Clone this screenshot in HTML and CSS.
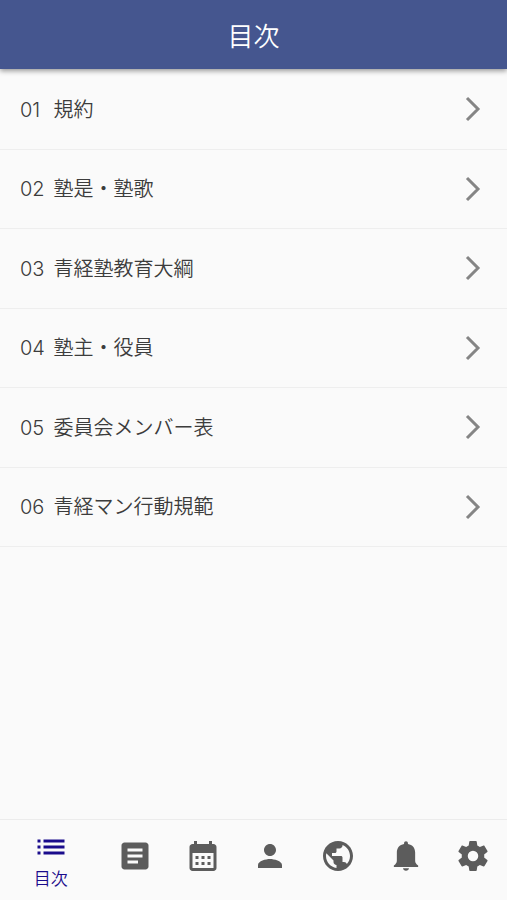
FILE: index.html
```
<!DOCTYPE html>
<html lang="ja">
<head>
<meta charset="utf-8">
<meta name="viewport" content="width=device-width, initial-scale=1">
<title>目次</title>
<link rel="stylesheet" href="styles.css">
</head>
<body>
<header class="header"><h1 class="title">目次</h1></header>
<main class="content">
  <ul class="list">
    <li><a class="row" href="#c1"><span class="label"><span class="num">01</span> 規約</span><svg class="chevron" viewBox="0 0 16 26" aria-hidden="true"><path d="M2 2 13 13 2 24"/></svg></a></li>
    <li><a class="row" href="#c2"><span class="label"><span class="num">02</span> 塾是・塾歌</span><svg class="chevron" viewBox="0 0 16 26" aria-hidden="true"><path d="M2 2 13 13 2 24"/></svg></a></li>
    <li><a class="row" href="#c3"><span class="label"><span class="num">03</span> 青経塾教育大綱</span><svg class="chevron" viewBox="0 0 16 26" aria-hidden="true"><path d="M2 2 13 13 2 24"/></svg></a></li>
    <li><a class="row" href="#c4"><span class="label"><span class="num">04</span> 塾主・役員</span><svg class="chevron" viewBox="0 0 16 26" aria-hidden="true"><path d="M2 2 13 13 2 24"/></svg></a></li>
    <li><a class="row" href="#c5"><span class="label"><span class="num">05</span> 委員会メンバー表</span><svg class="chevron" viewBox="0 0 16 26" aria-hidden="true"><path d="M2 2 13 13 2 24"/></svg></a></li>
    <li><a class="row" href="#c6"><span class="label"><span class="num">06</span> 青経マン行動規範</span><svg class="chevron" viewBox="0 0 16 26" aria-hidden="true"><path d="M2 2 13 13 2 24"/></svg></a></li>
  </ul>
</main>
<nav class="tabs">
  <button class="tab tab-active" type="button">
    <svg class="icon" viewBox="0 0 24 24" aria-hidden="true"><path d="M3 13h2v-2H3v2zm0 4h2v-2H3v2zm0-8h2V7H3v2zm4 4h14v-2H7v2zm0 4h14v-2H7v2zM7 7v2h14V7H7z"/></svg>
    <span>目次</span>
  </button>
  <button class="tab" type="button" aria-label="記事">
    <svg class="icon" viewBox="0 0 24 24" aria-hidden="true"><path d="M19 3H5c-1.1 0-2 .9-2 2v14c0 1.1.9 2 2 2h14c1.1 0 2-.9 2-2V5c0-1.1-.9-2-2-2zm-5 14H7v-2h7v2zm3-4H7v-2h10v2zm0-4H7V7h10v2z"/></svg>
  </button>
  <button class="tab" type="button" aria-label="カレンダー">
    <svg class="icon" viewBox="0 0 24 24" aria-hidden="true"><path fill-rule="evenodd" d="M6 2h2v2h8V2h2v2h1c1.1 0 2 .9 2 2v14c0 1.1-.9 2-2 2H5c-1.1 0-2-.9-2-2V6c0-1.1.9-2 2-2h1V2zM5 10v10h14V10H5zm2 2h2v2H7v-2zm4 0h2v2h-2v-2zm4 0h2v2h-2v-2zm-8 4h2v2H7v-2zm4 0h2v2h-2v-2zm4 0h2v2h-2v-2z"/></svg>
  </button>
  <button class="tab" type="button" aria-label="プロフィール">
    <svg class="icon" viewBox="0 0 24 24" aria-hidden="true"><path d="M12 12c2.21 0 4-1.79 4-4s-1.790-4-4-4-4 1.790-4 4 1.790 4 4 4zm0 2c-2.670 0-8 1.340-8 4v2h16v-2c0-2.660-5.330-4-8-4z"/></svg>
  </button>
  <button class="tab" type="button" aria-label="ウェブ">
    <svg class="icon" viewBox="0 0 24 24" aria-hidden="true"><path d="M12 2C6.480 2 2 6.480 2 12s4.480 10 10 10 10-4.480 10-10S17.520 2 12 2zm-1 17.930c-3.950-.49-7-3.850-7-7.930 0-.62.080-1.210.210-1.790L9 15v1c0 1.100.9 2 2 2v1.930zm6.900-2.540c-.26-.81-1-1.390-1.900-1.390h-1v-3c0-.55-.45-1-1-1H8v-2h2c.55 0 1-.45 1-1V7h2c1.100 0 2-.9 2-2v-.41c2.930 1.190 5 4.060 5 7.410 0 2.080-.8 3.970-2.100 5.390z"/></svg>
  </button>
  <button class="tab" type="button" aria-label="お知らせ">
    <svg class="icon" viewBox="0 0 24 24" aria-hidden="true"><path d="M12 2.200c-.75 0-1.300.55-1.300 1.300v.5C7.700 4.500 5.900 6.700 5.900 9.700v5.300c0 1.200-.4 1.900-1.100 2.600l-.9.7v1h16.200v-1l-.9-.7c-.7-.7-1.100-1.400-1.100-2.600V9.700c0-3-1.800-5.200-4.800-5.700v-.5c0-.75-.55-1.300-1.300-1.300zM10 20.200h4c-.1 1-.9 1.700-2 1.700s-1.900-.7-2-1.700z"/></svg>
  </button>
  <button class="tab" type="button" aria-label="設定">
    <svg class="icon" viewBox="0 0 24 24" aria-hidden="true"><path d="M12 15.500A3.500 3.500 0 0 1 8.500 12 3.500 3.500 0 0 1 12 8.500a3.500 3.500 0 0 1 3.500 3.500 3.500 3.500 0 0 1-3.500 3.500m7.430-2.530c.04-.32.070-.64.070-.97s-.03-.66-.07-1l2.110-1.630c.19-.15.24-.42.12-.64l-2-3.460c-.12-.22-.39-.31-.61-.22l-2.490 1c-.52-.39-1.060-.73-1.690-.98l-.37-2.650A.506.506 0 0 0 14 2h-4c-.25 0-.46.18-.5.42l-.37 2.650c-.63.25-1.170.59-1.690.98l-2.490-1c-.22-.09-.49 0-.61.22l-2 3.460c-.13.22-.07.49.12.64L4.570 11c-.04.34-.07.67-.07 1s.03.65.07.97l-2.110 1.660c-.19.15-.25.42-.12.64l2 3.460c.12.22.39.3.61.22l2.490-1.010c.52.4 1.060.74 1.690.99l.37 2.650c.04.24.25.42.5.42h4c.25 0 .46-.18.5-.42l.37-2.650c.63-.26 1.170-.59 1.690-.99l2.490 1.010c.22.08.49 0 .61-.22l2-3.460c.12-.22.07-.49-.12-.64l-2.110-1.660z"/></svg>
  </button>
</nav>
</body>
</html>
```
FILE: styles.css
```
* { box-sizing: border-box; }

body {
  margin: 0;
  min-height: 100vh;
  display: flex;
  flex-direction: column;
  background: #fafafa;
  color: #3c3c3c;
  font-family: "Noto Sans CJK JP", sans-serif;
}

.header {
  padding: 17px 16px 16px;
  background: #45568f;
  color: #fff;
  text-align: center;
  box-shadow: 0 2px 5px rgba(0, 0, 0, 0.4);
}

.title {
  margin: 0;
  font-size: 26px;
  line-height: 36px;
  font-weight: 350;
}

.content { flex: 1; }

.list {
  display: grid;
  grid-auto-rows: 1fr;
  min-height: 478px;
  margin: 0;
  padding: 1px 0 0;
  list-style: none;
}

.list li {
  display: flex;
  border-bottom: 1px solid #eeeeee;
}

.row {
  flex: 1;
  display: flex;
  align-items: center;
  justify-content: space-between;
  padding: 0 26px 0 20px;
  color: inherit;
  font-size: 20px;
  line-height: 30px;
  font-weight: 350;
  text-decoration: none;
}

.num {
  display: inline-block;
  min-width: 29px;
  font-family: Inter, sans-serif;
  font-weight: 300;
}

.chevron {
  width: 16px;
  height: 26px;
  fill: none;
  stroke: #858585;
  stroke-width: 3;
}

.tabs {
  display: flex;
  height: 81px;
  border-top: 1px solid #ececec;
}

.tab {
  flex: 2 1 0;
  display: flex;
  flex-direction: column;
  align-items: center;
  padding: 18px 0 0;
  border: 0;
  background: none;
  color: #5c5c5c;
  font-family: inherit;
  font-size: 17px;
  line-height: 26px;
  font-weight: 350;
}

.tab-active {
  flex-grow: 3;
  padding-top: 9px;
  color: #1a0c8c;
}

.icon {
  width: 36px;
  height: 36px;
  flex: none;
  fill: currentColor;
}
```
